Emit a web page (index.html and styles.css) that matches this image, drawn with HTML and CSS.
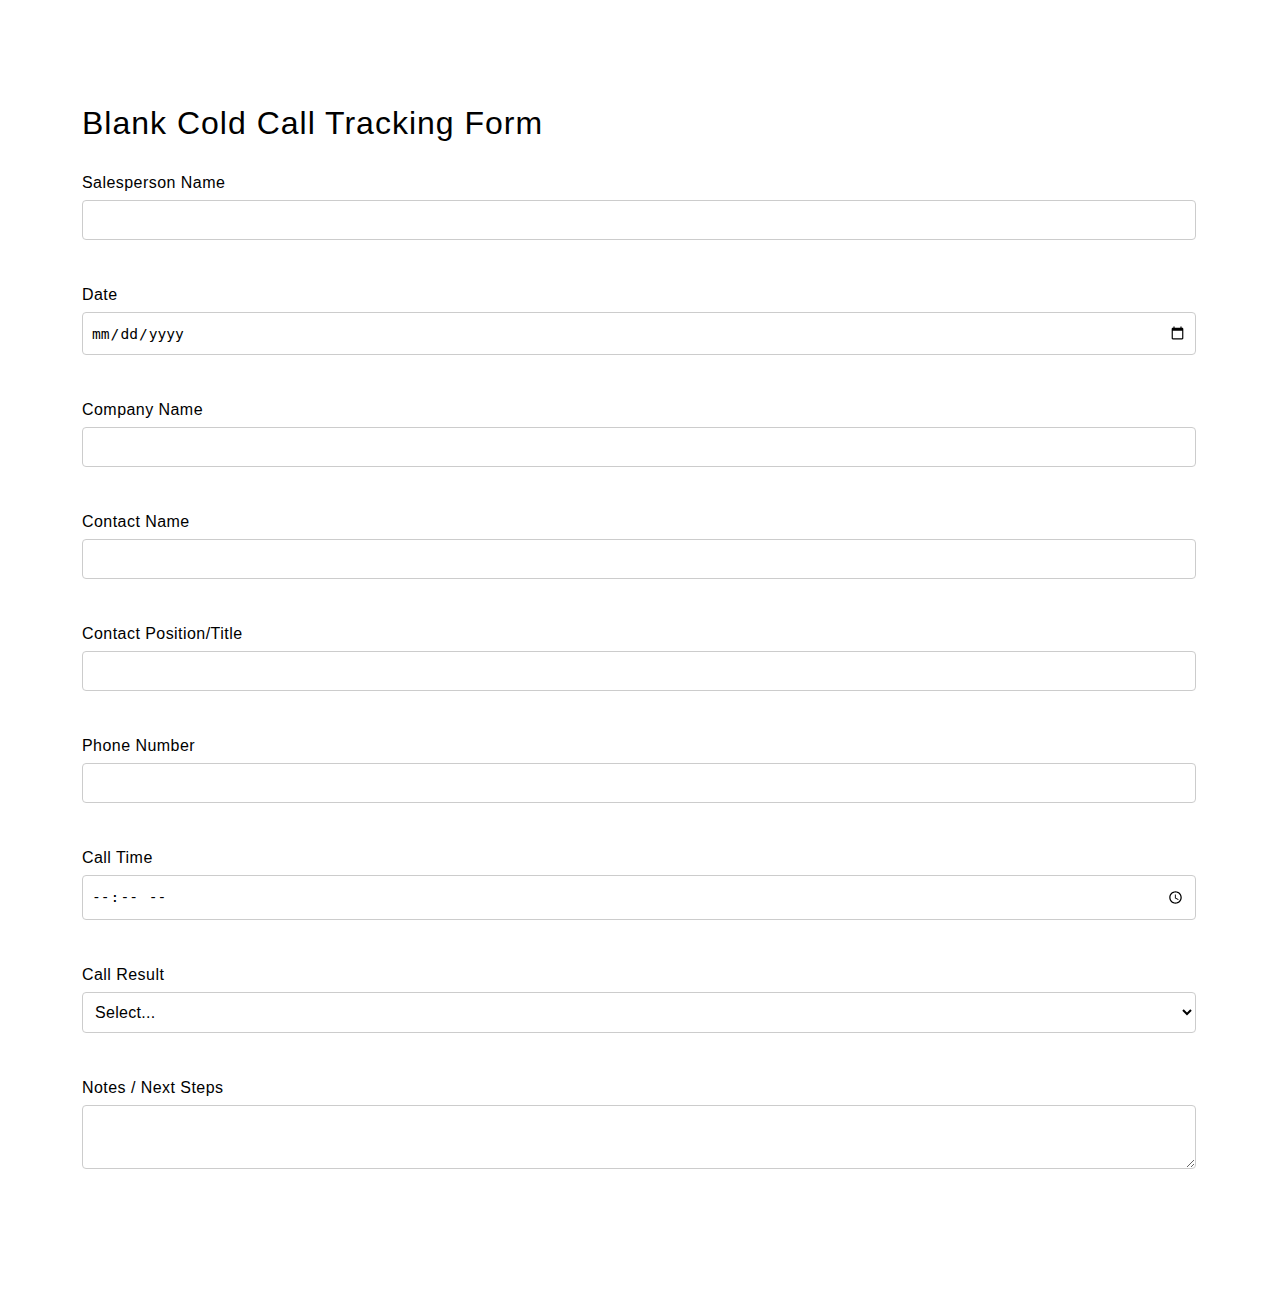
FILE: index.html
```html
<!DOCTYPE html>
<html lang="en">
<head>
<meta charset="utf-8">
<title>Blank Cold Call Tracking Form</title>
<link rel="stylesheet" href="styles.css">
</head>
<body>
<main class="page">
  <h1 class="title">Blank Cold Call Tracking Form</h1>
  <form class="form">
    <div class="field">
      <label class="label" for="salesperson">Salesperson Name</label>
      <input class="control" type="text" id="salesperson">
    </div>
    <div class="field">
      <label class="label" for="date">Date</label>
      <input class="control control-date" type="date" id="date">
    </div>
    <div class="field">
      <label class="label" for="company">Company Name</label>
      <input class="control" type="text" id="company">
    </div>
    <div class="field">
      <label class="label" for="contact">Contact Name</label>
      <input class="control" type="text" id="contact">
    </div>
    <div class="field">
      <label class="label" for="position">Contact Position/Title</label>
      <input class="control" type="text" id="position">
    </div>
    <div class="field">
      <label class="label" for="phone">Phone Number</label>
      <input class="control" type="tel" id="phone">
    </div>
    <div class="field">
      <label class="label" for="time">Call Time</label>
      <input class="control control-time" type="time" id="time">
    </div>
    <div class="field">
      <label class="label" for="result">Call Result</label>
      <select class="control control-select" id="result">
        <option>Select...</option>
        <option>Interested</option>
        <option>Not Interested</option>
        <option>Call Back</option>
        <option>No Answer</option>
      </select>
    </div>
    <div class="field">
      <label class="label" for="notes">Notes / Next Steps</label>
      <textarea class="control control-notes" id="notes"></textarea>
    </div>
  </form>
</main>
</body>
</html>
```
FILE: styles.css
```css
* {
  box-sizing: border-box;
}

body {
  margin: 0;
  background: #ffffff;
  color: #000000;
  font-family: "Liberation Sans", Arial, sans-serif;
}

.page {
  padding: 105px 82px 120px;
}

.title {
  margin: 0 0 32px;
  font-size: 32px;
  font-weight: 400;
  line-height: 37px;
  letter-spacing: 1px;
}

.form {
  display: flex;
  flex-direction: column;
  gap: 46px;
}

.field {
  display: flex;
  flex-direction: column;
}

.label {
  display: block;
  margin-bottom: 8px;
  font-size: 16px;
  line-height: 18px;
  letter-spacing: 0.45px;
}

.control {
  width: 100%;
  height: 40px;
  padding: 10px;
  border: 1px solid #cccccc;
  border-radius: 4px;
  background: #ffffff;
  font-size: 16px;
  line-height: 18px;
  color: #000000;
}

.control-date,
.control-time {
  padding-left: 8px;
  font-family: "DejaVu Sans Mono", "Liberation Mono", monospace;
  font-size: 14.6px;
}

.control-date {
  height: 43px;
  padding-right: 8px;
}

.control-time {
  height: 45px;
  padding-right: 9px;
}

.control-select {
  height: 41px;
  padding-left: 8px;
  font-family: "Liberation Sans", Arial, sans-serif;
  letter-spacing: 0.3px;
}

.control-notes {
  height: 64px;
  resize: vertical;
  font-family: "Liberation Sans", Arial, sans-serif;
}
```
